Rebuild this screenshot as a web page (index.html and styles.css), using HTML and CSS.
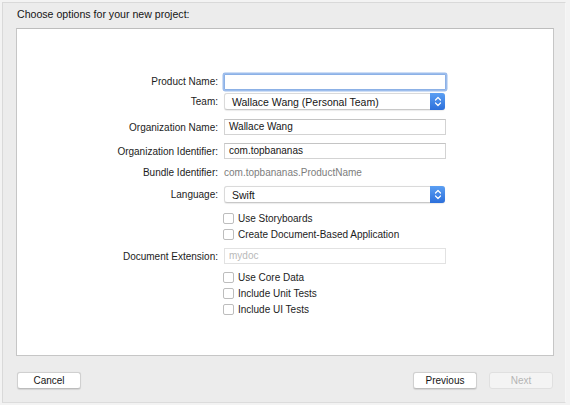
FILE: index.html
```html
<!DOCTYPE html>
<html>
<head>
<meta charset="utf-8">
<link rel="stylesheet" href="styles.css">
</head>
<body>
<div class="window">
  <div class="title">Choose options for your new project:</div>
  <div class="panel">
    <div class="form">
      <div class="row r1">
        <div class="label">Product Name:</div>
        <div class="field focus"></div>
      </div>
      <div class="row r2">
        <div class="label">Team:</div>
        <div class="popup"><span class="ptext">Wallace Wang (Personal Team)</span><span class="stepper"><svg width="8" height="11" viewBox="0 0 8 11"><path d="M1.5 4 L4 1.5 L6.5 4 M1.5 7 L4 9.5 L6.5 7" fill="none" stroke="#fff" stroke-width="1.2" stroke-linecap="round" stroke-linejoin="round"/></svg></span></div>
      </div>
      <div class="row r3">
        <div class="label">Organization Name:</div>
        <div class="field">Wallace Wang</div>
      </div>
      <div class="row r4">
        <div class="label">Organization Identifier:</div>
        <div class="field">com.topbananas</div>
      </div>
      <div class="row r5">
        <div class="label">Bundle Identifier:</div>
        <div class="static">com.topbananas.ProductName</div>
      </div>
      <div class="row r6">
        <div class="label">Language:</div>
        <div class="popup"><span class="ptext">Swift</span><span class="stepper"><svg width="8" height="11" viewBox="0 0 8 11"><path d="M1.5 4 L4 1.5 L6.5 4 M1.5 7 L4 9.5 L6.5 7" fill="none" stroke="#fff" stroke-width="1.2" stroke-linecap="round" stroke-linejoin="round"/></svg></span></div>
      </div>
      <div class="row r7">
        <div class="label"></div>
        <div class="check"><span class="box"></span>Use Storyboards</div>
      </div>
      <div class="row r8">
        <div class="label"></div>
        <div class="check"><span class="box"></span>Create Document-Based Application</div>
      </div>
      <div class="row r9">
        <div class="label">Document Extension:</div>
        <div class="field disabled">mydoc</div>
      </div>
      <div class="row r10">
        <div class="label"></div>
        <div class="check"><span class="box"></span>Use Core Data</div>
      </div>
      <div class="row r11">
        <div class="label"></div>
        <div class="check"><span class="box"></span>Include Unit Tests</div>
      </div>
      <div class="row r12">
        <div class="label"></div>
        <div class="check"><span class="box"></span>Include UI Tests</div>
      </div>
    </div>
  </div>
  <div class="buttons">
    <div class="btn">Cancel</div>
    <div class="right">
      <div class="btn">Previous</div>
      <div class="btn off">Next</div>
    </div>
  </div>
</div>
</body>
</html>
```
FILE: styles.css
```css
* { box-sizing: border-box; }
html, body { margin: 0; padding: 0; }
body {
  width: 570px;
  height: 405px;
  background: #f3f3f3;
  font-family: "Liberation Sans", Arial, sans-serif;
  color: #1c1c1c;
  overflow: hidden;
}
.window {
  margin: 2px 0 0 2px;
  width: 564px;
  height: 401px;
  background: #ececec;
  border-top: 1px solid #d9d9d9;
  border-left: 1px solid #d9d9d9;
  border-right: 1px solid #f6f6f6;
  border-bottom: 1px solid #dcdcdc;
}
.title {
  height: 25px;
  padding: 4px 0 0 14px;
  font-size: 10.6px;
  line-height: 14px;
  color: #151515;
}
.panel {
  margin-left: 13px;
  width: 538px;
  height: 328px;
  background: #fff;
  border: 1px solid #c6c6c6;
  border-top-color: #bdbdbd;
}
.form {
  padding-top: 44px;
  display: flex;
  flex-direction: column;
}
.row {
  display: flex;
  align-items: center;
  height: 16px;
  font-size: 10px;
}
.label {
  width: 201px;
  margin-right: 6px;
  text-align: right;
  white-space: nowrap;
}
.r1 { height: 17px; }
.r2 { height: 17px; margin-top: 3px; }
.r3 { margin-top: 9px; }
.r4 { margin-top: 8px; }
.r5 { margin-top: 5px; }
.r6 { height: 17px; margin-top: 6px; }
.r7 { margin-top: 7px; }
.r9 { margin-top: 6px; }
.r10 { margin-top: 5px; }
.field {
  width: 222px;
  height: 16px;
  border: 1px solid #d3d3d3;
  border-top-color: #c4c4c4;
  background: #fff;
  padding-left: 4px;
  line-height: 14px;
  color: #151515;
}
.field.focus {
  border-color: #8cb1e6;
  box-shadow: 0 0 0 1.5px #9dbdec;
  border-radius: 1px;
}
.field.disabled {
  border-color: #e2e2e2;
  color: #b9b9b9;
}
.static {
  color: #7d7d7d;
}
.popup {
  width: 221px;
  height: 17px;
  display: flex;
  align-items: center;
  justify-content: space-between;
  background: #fff;
  border: 1px solid #dadada;
  border-bottom-color: #c8c8c8;
  border-radius: 3px;
  box-shadow: 0 0.5px 1px rgba(0,0,0,0.08);
  font-size: 10.5px;
  color: #151515;
}
.ptext { padding-left: 7px; }
.stepper {
  width: 15px;
  height: 17px;
  margin: -1px -1px -1px 0;
  border-radius: 0 3px 3px 0;
  background: linear-gradient(#5b9ff3, #2c6fdb);
  display: flex;
  align-items: center;
  justify-content: center;
}
.stepper svg { display: block; }
.check {
  display: flex;
  align-items: center;
  font-size: 10px;
  color: #1c1c1c;
}
.box {
  width: 11px;
  height: 11px;
  border: 1px solid #bdbdbd;
  border-radius: 2px;
  background: #fff;
  margin-right: 4px;
  margin-left: -1px;
}
.buttons {
  margin-top: 16px;
  padding: 0 12px 0 14px;
  display: flex;
  justify-content: space-between;
}
.right {
  display: flex;
  gap: 12px;
}
.btn {
  width: 64px;
  height: 17px;
  background: #fff;
  border: 1px solid #d0d0d0;
  border-bottom-color: #bcbcbc;
  border-radius: 3px;
  box-shadow: 0 0.5px 1px rgba(0,0,0,0.1);
  font-size: 10px;
  line-height: 15px;
  text-align: center;
  color: #151515;
}
.btn.off {
  background: #f4f4f4;
  border-color: #e0e0e0;
  box-shadow: none;
  color: #b4b4b4;
}
```
